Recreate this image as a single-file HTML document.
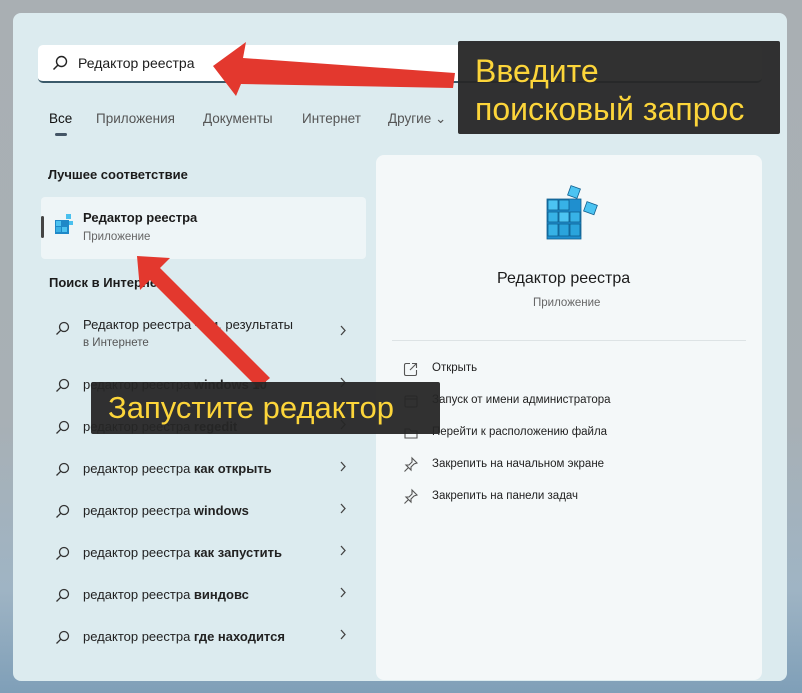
<!DOCTYPE html>
<html><head><meta charset="utf-8"><style>
*{margin:0;padding:0;box-sizing:border-box}
body{width:802px;height:693px;overflow:hidden;position:relative;font-family:"Segoe UI","Liberation Sans","DejaVu Sans",sans-serif;background:linear-gradient(180deg,#a9afb3 0%,#a8b0b5 60%,#9fb4c4 85%,#7f9fb8 100%);color:#1b1b1b}
.win{position:absolute;left:13px;top:13px;width:774px;height:668px;background:#dcebef;border-radius:8px}
.search{position:absolute;left:38px;top:45px;width:724px;height:38px;background:#fff;border-radius:5px;border-bottom:2px solid #3b5a6a}
.search .t{position:absolute;left:40px;top:10px;font-size:14px}
.tabs{position:absolute;top:111px;font-size:13.5px;color:#555}
.ab{position:absolute;font-size:13px}
.panel{position:absolute;left:376px;top:155px;width:386px;height:525px;background:#f4f8f9;border-radius:8px}
.r{position:absolute;left:83px;font-size:13px;color:#222}
.r b{font-weight:bold}
.act{position:absolute;left:432px;font-size:11.5px;color:#222}
.lbl{position:absolute;background:rgba(38,38,38,.95);color:#fcd53a;font-family:"Liberation Sans",sans-serif;border-radius:2px}
svg.ic{position:absolute}
</style></head><body>
<div class="win"></div>
<div class="search"><svg class="ic" style="left:14px;top:10px" width="16" height="16" viewBox="0 0 16 16"><circle cx="9.5" cy="6.5" r="5" fill="none" stroke="#222" stroke-width="1.4"/><path d="M6 10 L1.5 14.5" stroke="#222" stroke-width="1.5"/></svg><span class="t">Редактор реестра</span></div>
<div class="tabs" style="left:49px;color:#111">Все</div>
<div style="position:absolute;left:55px;top:133px;width:12px;height:3px;background:#456;border-radius:2px"></div>
<div class="tabs" style="left:96px">Приложения</div>
<div class="tabs" style="left:203px">Документы</div>
<div class="tabs" style="left:302px">Интернет</div>
<div class="tabs" style="left:388px">Другие ⌄</div>
<div class="ab" style="left:48px;top:167px;font-weight:bold">Лучшее соответствие</div>
<div style="position:absolute;left:41px;top:197px;width:325px;height:62px;background:#eef5f7;border-radius:4px"></div>
<div style="position:absolute;left:41px;top:216px;width:3px;height:22px;background:#444;border-radius:2px"></div>
<svg class="ic" style="left:53px;top:212px" width="22" height="24" viewBox="0 0 22 24"><rect x="2" y="8" width="14" height="14" fill="#1e88c8"/><rect x="3" y="9" width="5" height="5" fill="#4cc2f0"/><rect x="9" y="15" width="5" height="5" fill="#4cc2f0"/><rect x="3" y="15" width="5" height="5" fill="#39b0e4"/><rect x="13" y="2" width="5" height="5" fill="#49c0ee"/><rect x="16" y="9" width="4" height="4" fill="#49c0ee"/></svg>
<div class="ab" style="left:83px;top:210px;font-weight:bold">Редактор реестра</div>
<div class="ab" style="left:83px;top:231px;font-size:11.5px;color:#666">Приложение</div>
<div class="ab" style="left:49px;top:275px;font-weight:bold">Поиск в Интернете</div>
<div class="r" style="top:317px">Редактор реестра - см. результаты</div>
<div class="r" style="top:337px;font-size:11.5px;color:#555">в Интернете</div>
<div class="r" style="top:377px">редактор реестра <b>windows 10</b></div>
<div class="r" style="top:419px">редактор реестра <b>regedit</b></div>
<div class="r" style="top:461px">редактор реестра <b>как открыть</b></div>
<div class="r" style="top:503px">редактор реестра <b>windows</b></div>
<div class="r" style="top:545px">редактор реестра <b>как запустить</b></div>
<div class="r" style="top:587px">редактор реестра <b>виндовс</b></div>
<div class="r" style="top:629px">редактор реестра <b>где находится</b></div>
<svg class="ic" style="left:54px;top:320px" width="18" height="340" viewBox="0 0 18 340">
<g fill="none" stroke="#333" stroke-width="1.3">
<g id="m"><circle cx="10" cy="7" r="4.5"/><path d="M6.8 10.2 L2.5 14.5"/></g>
<use href="#m" y="57"/><use href="#m" y="99"/><use href="#m" y="141"/><use href="#m" y="183"/><use href="#m" y="225"/><use href="#m" y="267"/><use href="#m" y="309"/></g></svg>
<svg class="ic" style="left:338px;top:320px" width="10" height="330" viewBox="0 0 10 330"><g fill="none" stroke="#444" stroke-width="1.3">
<g id="c"><path d="M3 6 L7 10.5 L3 15"/></g>
<use href="#c" y="52"/><use href="#c" y="94"/><use href="#c" y="136"/><use href="#c" y="178"/><use href="#c" y="220"/><use href="#c" y="262"/><use href="#c" y="304"/></g></svg>
<div class="panel"></div>
<svg class="ic" style="left:545px;top:185px" width="60" height="60" viewBox="0 0 60 60">
<g stroke="#0f5f8f" stroke-width="0.8"><rect x="2" y="14" width="34" height="40" fill="#1f8fcf"/>
<rect x="3" y="15" width="10" height="10" fill="#4cc4f2"/><rect x="14" y="15" width="10" height="10" fill="#37b2e6"/><rect x="3" y="27" width="10" height="10" fill="#37b2e6"/><rect x="14" y="27" width="10" height="10" fill="#4cc4f2"/><rect x="25" y="27" width="10" height="10" fill="#37b2e6"/><rect x="3" y="39" width="10" height="12" fill="#37b2e6"/><rect x="14" y="39" width="10" height="12" fill="#2aa4dc"/><rect x="25" y="39" width="10" height="12" fill="#2aa4dc"/>
<rect x="24" y="2" width="10" height="10" fill="#4cc4f2" transform="rotate(20 29 7)"/><rect x="40" y="18" width="11" height="10" fill="#4cc4f2" transform="rotate(20 45 23)"/></g></svg>
<div class="ab" style="left:497px;top:270px;font-size:16px">Редактор реестра</div>
<div class="ab" style="left:533px;top:297px;font-size:11.5px;color:#666">Приложение</div>
<div style="position:absolute;left:392px;top:340px;width:354px;height:1px;background:#dde3e5"></div>
<svg class="ic" style="left:403px;top:362px" width="16" height="150" viewBox="0 0 16 150" fill="none" stroke="#555" stroke-width="1.1">
<path d="M7 1.5 H3 a1.5 1.5 0 0 0 -1.5 1.5 V12 a1.5 1.5 0 0 0 1.5 1.5 H12 a1.5 1.5 0 0 0 1.5 -1.5 V8 M9 1.5 H13.5 V6 M13.5 1.5 L7 8"/>
<rect x="2" y="34" width="12" height="11" rx="1.5"/><path d="M2 37 H14"/>
<path d="M2 67 V76 H14 V69 H8 L6.5 67 Z"/>
<path d="M9 96 L14 101 L11 102 L8 105 L8 108 L3 103 L6 103 L9 100 Z M5.5 105.5 L1.5 109.5"/>
<path d="M9 128 L14 133 L11 134 L8 137 L8 140 L3 135 L6 135 L9 132 Z M5.5 137.5 L1.5 141.5"/></svg>
<div class="act" style="top:362px">Открыть</div>
<div class="act" style="top:394px">Запуск от имени администратора</div>
<div class="act" style="top:426px">Перейти к расположению файла</div>
<div class="act" style="top:458px">Закрепить на начальном экране</div>
<div class="act" style="top:490px">Закрепить на панели задач</div>
<svg class="ic" style="left:0;top:0" width="802" height="693" viewBox="0 0 802 693">
<polygon points="213,66 246,42 243,58 455,73 453,88 241,84 236,96" fill="#e3382e"/>
<polygon points="137,256 170,258 160,268 270,378 258,388 150,280 140,290" fill="#e3382e"/></svg>
<div class="lbl" style="left:458px;top:41px;width:322px;height:93px;font-size:32px;line-height:38px;padding:11px 0 0 17px">Введите<br>поисковый запрос</div>
<div class="lbl" style="left:91px;top:382px;width:349px;height:52px;font-size:31px;line-height:52px;padding-left:17px">Запустите редактор</div>
</body></html>
